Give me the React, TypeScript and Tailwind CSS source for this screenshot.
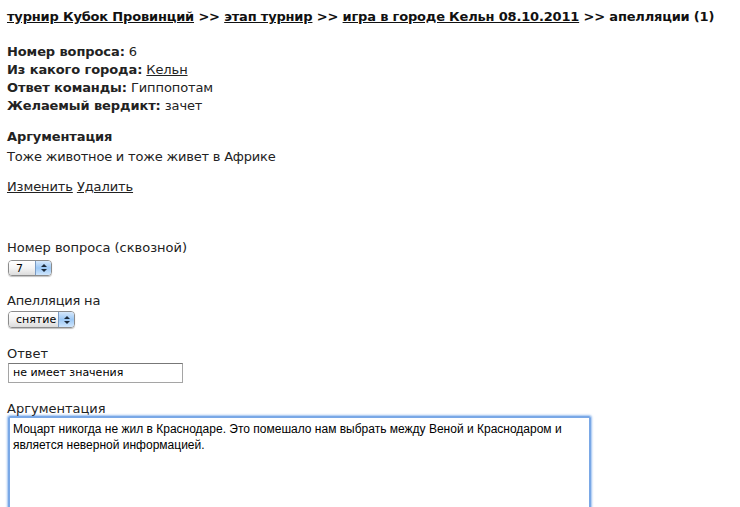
import React from "react";

function AquaSelect({ value, width, height }: { value: string; width: string; height: string }) {
  return (
    <div
      className={`flex ${height} ${width} overflow-hidden rounded-[4px] border border-[#8c8c8c] shadow-[0_1px_1px_rgba(0,0,0,0.25)]`}
    >
      <div className="flex flex-1 items-center bg-gradient-to-b from-white via-[#f4f4f4] to-[#dcdcdc] pl-[7px] text-[11px] leading-none text-black">
        {value}
      </div>
      <div className="flex w-[16px] flex-col items-center justify-center gap-[2px] border-l border-[#7a9bc4] bg-gradient-to-b from-[#d6e8fb] via-[#9cc8f5] to-[#cfe6fd]">
        <svg width="6" height="3" viewBox="0 0 6 3">
          <path d="M0 3 L3 0 L6 3 Z" fill="#1c2a3a" />
        </svg>
        <svg width="6" height="3" viewBox="0 0 6 3">
          <path d="M0 0 L3 3 L6 0 Z" fill="#1c2a3a" />
        </svg>
      </div>
    </div>
  );
}

export default function App() {
  return (
    <div className="min-h-[507px] bg-white px-[7px] text-[13px] text-[#222] [font-family:'DejaVu_Sans',Verdana,sans-serif]">
      <div className="pt-[8px] font-bold leading-[18px] tracking-[-0.18px] text-[#111]">
        <a className="underline">турнир Кубок Провинций</a> &gt;&gt;{" "}
        <a className="underline">этап турнир</a> &gt;&gt;{" "}
        <a className="underline">игра в городе Кельн 08.10.2011</a> &gt;&gt; апелляции (1)
      </div>

      <div className="mt-[17px] leading-[18px] tracking-[-0.1px]">
        <div>
          <b>Номер вопроса:</b> 6
        </div>
        <div>
          <b>Из какого города:</b> <a className="underline">Кельн</a>
        </div>
        <div>
          <b>Ответ команды:</b> Гиппопотам
        </div>
        <div>
          <b>Желаемый вердикт:</b> зачет
        </div>
      </div>

      <div className="mt-[13px] font-bold leading-[18px] tracking-[-0.1px]">Аргументация</div>
      <div className="mt-[2px] leading-[18px] tracking-[-0.2px]">Тоже животное и тоже живет в Африке</div>

      <div className="mt-[12px] leading-[18px] tracking-[-0.1px]">
        <a className="underline">Изменить</a> <a className="underline">Удалить</a>
      </div>

      <div className="mt-[43px] leading-[18px]">Номер вопроса (сквозной)</div>
      <div className="mt-[3px] pl-[1px]">
        <AquaSelect value="7" width="w-[44px]" height="h-[16px]" />
      </div>

      <div className="mt-[16px] leading-[18px] tracking-[-0.2px]">Апелляция на</div>
      <div className="mt-[1px] pl-[1px]">
        <AquaSelect value="снятие" width="w-[67px]" height="h-[17px]" />
      </div>

      <div className="mt-[17px] leading-[18px]">Ответ</div>
      <div className="pl-[1px]">
        <div className="flex h-[20px] w-[175px] items-center border border-[#a5a5a5] border-t-[#777] px-[4px] text-[11px] text-black">
          не имеет значения
        </div>
      </div>

      <div className="mt-[17px] leading-[18px]">Аргументация</div>
      <div className="mt-[-2px] pl-[1px]">
        <div className="h-[100px] w-[583px] rounded-[2px] border-[2px] border-[#7aa8e6] px-[3px] pt-[3px] text-[12px] leading-[16px] text-black shadow-[0_0_2px_1px_rgba(90,150,230,0.6)] [font-family:'Liberation_Sans',Arial,sans-serif]">
          Моцарт никогда не жил в Краснодаре. Это помешало нам выбрать между Веной и Краснодаром и
          является неверной информацией.
        </div>
      </div>
    </div>
  );
}
